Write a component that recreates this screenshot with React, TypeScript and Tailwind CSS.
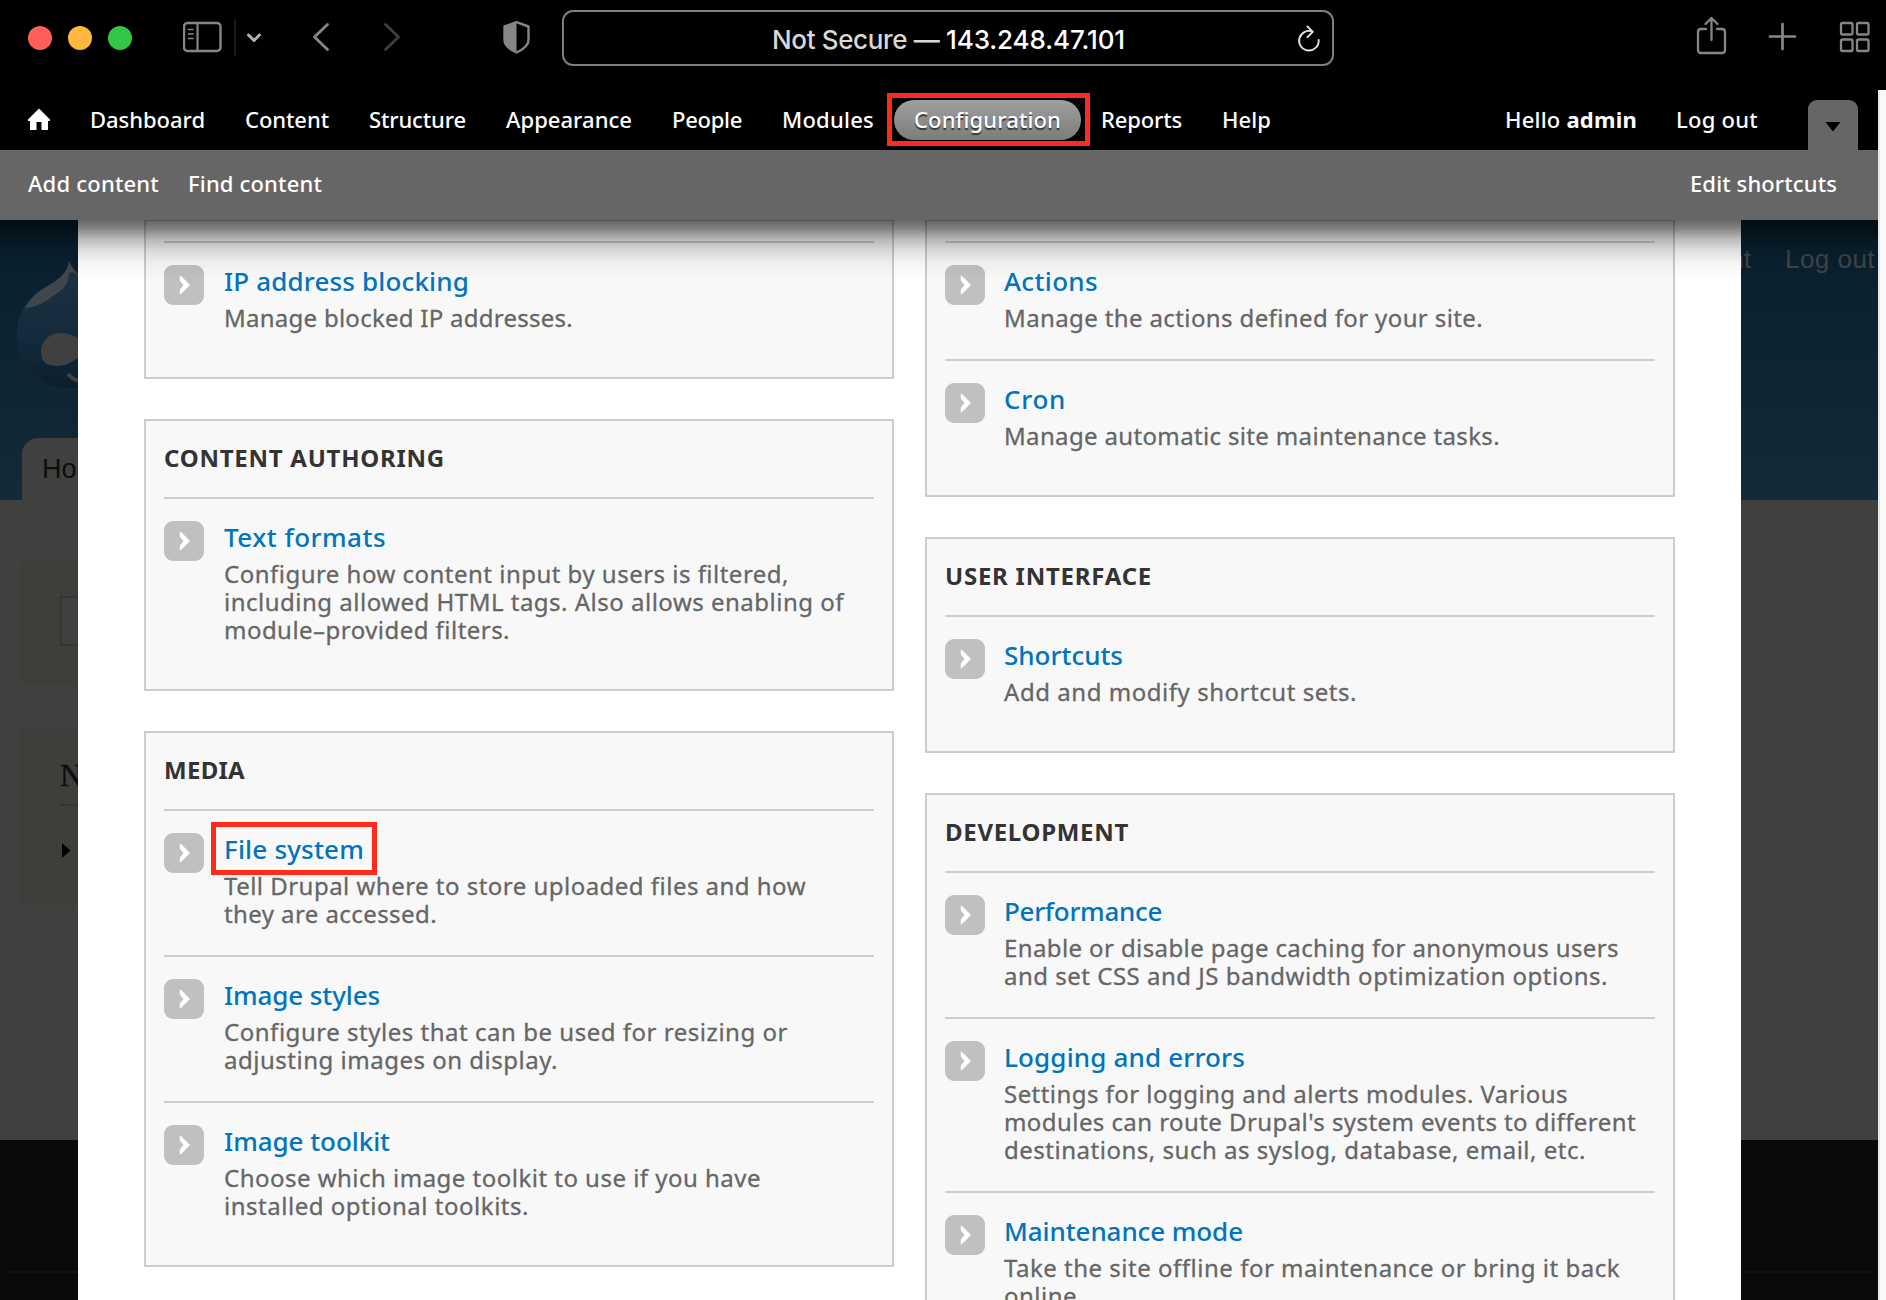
import React, { useLayoutEffect, useRef, useState } from "react";

/** One line of text whose tracking is adjusted to fill a given advance width. */
function Line({ w, className = "", children }: { w: number; className?: string; children: React.ReactNode }) {
  const ref = useRef<HTMLSpanElement>(null);
  const [track, setTrack] = useState(0);
  useLayoutEffect(() => {
    const el = ref.current;
    if (!el) return;
    const n = (el.textContent || "").length;
    setTrack((w - el.getBoundingClientRect().width) / n);
  }, []);
  return (
    <span className={`block whitespace-nowrap ${className}`} style={{ width: w }}>
      <span ref={ref} style={{ letterSpacing: track }}>{children}</span>
    </span>
  );
}

type Row = [string, number];
type Entry = { title: Row; lines: Row[]; marked?: boolean };

const people: Entry[] = [{ title: ["IP address blocking", 245], lines: [["Manage blocked IP addresses.", 349]] }];
const authoring: Entry[] = [
  {
    title: ["Text formats", 162],
    lines: [
      ["Configure how content input by users is filtered,", 565],
      ["including allowed HTML tags. Also allows enabling of", 620],
      ["module–provided filters.", 286],
    ],
  },
];
const media: Entry[] = [
  {
    title: ["File system", 140],
    marked: true,
    lines: [["Tell Drupal where to store uploaded files and how", 582], ["they are accessed.", 213]],
  },
  {
    title: ["Image styles", 156],
    lines: [["Configure styles that can be used for resizing or", 564], ["adjusting images on display.", 334]],
  },
  {
    title: ["Image toolkit", 166],
    lines: [["Choose which image toolkit to use if you have", 537], ["installed optional toolkits.", 305]],
  },
];
const system: Entry[] = [
  { title: ["Actions", 94], lines: [["Manage the actions defined for your site.", 479]] },
  { title: ["Cron", 62], lines: [["Manage automatic site maintenance tasks.", 496]] },
];
const ui: Entry[] = [{ title: ["Shortcuts", 119], lines: [["Add and modify shortcut sets.", 353]] }];
const development: Entry[] = [
  {
    title: ["Performance", 158],
    lines: [["Enable or disable page caching for anonymous users", 615], ["and set CSS and JS bandwidth optimization options.", 604]],
  },
  {
    title: ["Logging and errors", 241],
    lines: [
      ["Settings for logging and alerts modules. Various", 564],
      ["modules can route Drupal's system events to different", 632],
      ["destinations, such as syslog, database, email, etc.", 582],
    ],
  },
  {
    title: ["Maintenance mode", 239],
    lines: [["Take the site offline for maintenance or bring it back", 616], ["online.", 80]],
  },
];

function EntryRow({ entry }: { entry: Entry }) {
  return (
    <li className="flex border-t-2 border-[#cccccc] pb-[27px] last:pb-[45px]">
      <span className="mt-[22px] flex size-10 shrink-0 items-center justify-center rounded-[9px] bg-[#c0c0c0]">
        <svg viewBox="0 0 40 40" className="size-10">
          <path d="M15.8 10.500L17.600 11.500L26 20L17.600 28.500L15.800 29.500V24.500L19.500 20L15.800 15.500Z" fill="#fff" />
        </svg>
      </span>
      <div className="relative ml-5 pt-[20px]">
        <Line w={entry.title[1]} className="h-9 text-[26px] font-medium leading-9 text-[#0074bd]">
          {entry.title[0]}
        </Line>
        <div className="pt-[5px]">
          {entry.lines.map(([t, w]) => (
            <Line key={t} w={w} className="h-7 text-[24px] leading-7 text-[#666666] [-webkit-text-stroke:0.3px_#666666]">
              {t}
            </Line>
          ))}
        </div>
        {entry.marked && <span className="absolute -left-[13px] top-[11px] h-[53px] w-[166px] border-[5px] border-[#ff2a1c]" />}
      </div>
    </li>
  );
}

function Panel({ heading, entries }: { heading?: Row; entries: Entry[] }) {
  return (
    <section className="border-2 border-[#cccccc] bg-[#f8f8f8] px-[18px]">
      {heading ? (
        <div className="h-[76px] pt-[23px]">
          <Line w={heading[1]} className="text-[24px] font-bold leading-[28px] text-[#333333]">
            {heading[0]}
          </Line>
        </div>
      ) : (
        <div className="h-[20px]" />
      )}
      <ul>
        {entries.map((e) => (
          <EntryRow key={e.title[0]} entry={e} />
        ))}
      </ul>
    </section>
  );
}

const nav: Row[] = [
  ["Dashboard", 115],
  ["Content", 84],
  ["Structure", 97],
  ["Appearance", 126],
  ["People", 70],
  ["Modules", 92],
  ["Configuration", 147],
  ["Reports", 81],
  ["Help", 49],
];

function BrowserBar() {
  return (
    <div className="flex h-[90px] items-start bg-black">
      <div className="ml-7 mt-[26px] flex gap-4">
        <i className="size-6 rounded-full bg-[#ff5f5b]" />
        <i className="size-6 rounded-full bg-[#fdb83e]" />
        <i className="size-6 rounded-full bg-[#34c648]" />
      </div>
      <svg className="ml-[51px] mt-[20px]" width="350" height="36" viewBox="183 20 350 36" fill="none" strokeLinecap="round" strokeLinejoin="round">
        <rect x="184" y="23" width="36.5" height="28" rx="3.5" stroke="#868686" strokeWidth="2.4" />
        <path d="M197.500 23V51" stroke="#868686" strokeWidth="2.2" />
        <path d="M188.500 29.500h4.500M188.500 34h4.500M188.500 38.500h4.500" stroke="#868686" strokeWidth="1.6" />
        <path d="M235 20V56" stroke="#1c1c1c" strokeWidth="2" />
        <path d="M248.500 35L254 40.500L259.500 35" stroke="#b4b4b4" strokeWidth="3" />
        <path d="M327.500 24.500L314.500 37L327.500 49.500" stroke="#868686" strokeWidth="2.8" />
        <path d="M385.500 24.500L398.500 37L385.500 49.500" stroke="#3f3f3f" strokeWidth="2.8" />
        <path d="M516.500 22.200L528.500 26.500V40C528.500 45.500 523 49.500 516.500 52.500C510 49.500 504.500 45.500 504.500 40V26.500Z" stroke="#868686" strokeWidth="2.4" />
        <path d="M516.500 22V52.500C510 49.500 504.500 45.500 504.500 40V26.500Z" fill="#868686" />
      </svg>
      <div className="ml-[29px] mt-[10px] flex h-14 w-[772px] rounded-[11px] border-2 border-[#7e7e7e] pl-[208px] pt-[12px] font-[Inter] text-[26px] font-medium leading-8">
        <Line w={174} className="text-[#d8d8d8]">Not Secure —&nbsp;</Line>
        <Line w={179} className="text-white">143.248.47.101</Line>
        <svg className="ml-[172px] -mt-px" width="26" height="32" viewBox="0 0 26 32" fill="none" stroke="#e0e0e0" strokeWidth="1.9" strokeLinecap="round" strokeLinejoin="round">
          <path d="M15.500 8.600A9.800 9.800 0 1 0 21.700 17" />
          <path d="M10.500 3.500L15.700 8.800L10.500 14" />
        </svg>
      </div>
      <svg className="ml-[361px] mt-[16px]" width="180" height="44" viewBox="1695 16 180 44" fill="none" stroke="#868686" strokeWidth="2.3" strokeLinecap="round" strokeLinejoin="round">
        <path d="M1706 29H1701Q1698 29 1698 32V50Q1698 53 1701 53H1722Q1725 53 1725 50V32Q1725 29 1722 29H1717" />
        <path d="M1711.500 40V18.500M1705.500 24L1711.500 18L1717.500 24" />
        <path d="M1770 36.500H1795M1782.500 24V49" strokeWidth="2.7" />
        <rect x="1841" y="23" width="11.500" height="11.500" rx="1.500" />
        <rect x="1857" y="23" width="11.500" height="11.500" rx="1.500" />
        <rect x="1841" y="39.500" width="11.500" height="11.500" rx="1.500" />
        <rect x="1857" y="39.500" width="11.500" height="11.500" rx="1.500" />
      </svg>
    </div>
  );
}

function Toolbar() {
  return (
    <div className="flex h-[60px] items-start bg-black pt-[10px] text-[22px] font-medium text-white">
      <svg className="ml-7 mt-[8px]" width="22" height="22" viewBox="0 0 22 22">
        <path d="M11 0.500L22 11.500V13H20V22H13.500V14H8.500V22H2V13H0V11.500Z" fill="#fff" />
      </svg>
      <nav className="ml-[20px] flex leading-[38px]">
        {nav.map(([t, w]) =>
          t === "Configuration" ? (
            <div key={t} className="relative h-10 rounded-[20px] bg-gradient-to-b from-[#a0a0a0] to-[#7c7c7c] px-5 [text-shadow:0_2px_1px_#333]">
              <Line w={w}>{t}</Line>
              <span className="absolute -left-[7px] -top-[7px] h-[53px] w-[203px] border-[5px] border-[#ff2a1c]" />
            </div>
          ) : (
            <div key={t} className="px-5">
              <Line w={w}>{t}</Line>
            </div>
          )
        )}
      </nav>
      <div className="ml-auto flex leading-[38px]">
        <Line w={132}>Hello <b>admin</b></Line>
        <Line w={82} className="ml-[39px]">Log out</Line>
        <div className="ml-[50px] mr-5 flex h-[50px] w-[50px] justify-center rounded-t-[9px] bg-[#666666] pt-[22px]">
          <svg width="16" height="10" viewBox="0 0 16 10">
            <path d="M0.500 0H15.500L8 9.500Z" fill="#000" />
          </svg>
        </div>
      </div>
    </div>
  );
}

function Backdrop() {
  return (
    <div className="h-full bg-[#404040]">
      <div className="flex h-[280px] flex-col justify-between bg-gradient-to-b from-[#071e2d] to-[#142a38]">
        <div className="flex justify-between pt-[21px]">
          <svg className="ml-4 mt-[19px]" width="100" height="130" viewBox="16 260 100 130">
            <defs>
              <linearGradient id="drop" x1="0" y1="0" x2="0" y2="1">
                <stop offset="0" stopColor="#1d3241" />
                <stop offset="0.6" stopColor="#142b3c" />
                <stop offset="1" stopColor="#0a1d2b" />
              </linearGradient>
            </defs>
            <path d="M69 260C67 280 46 284 32 297C22 307 17 319 17 332C17 365 40 388 68 388H116V290C96 284 74 276 69 260Z" fill="url(#drop)" />
            <path d="M69 261C67 280 46 284 34 296C30 300 27 304 25 308C36 308 46 301 56 294C65 288 69 282 69 273C73 271 76 274 80 278C75 271 71 267 69 261Z" fill="#40474b" />
            <path d="M41 352C41 340 50 333 62 333C70 333 76 337 84 341V354C74 360 68 366 57 366C46 366 41 361 41 352Z" fill="#404040" />
            <path d="M69 375Q74 381 84 382" stroke="#404040" strokeWidth="4" fill="none" strokeLinecap="round" />
          </svg>
          <div className="flex gap-[34px] font-['Liberation_Sans'] text-[26px] leading-9 text-[#444444]">
            <span>My account</span>
            <Line w={90} className="mr-[3px]">Log out</Line>
          </div>
        </div>
        <div className="ml-[22px] h-[62px] w-[120px] rounded-t-[16px] bg-[#404040] pl-5 pt-[13px] font-['Liberation_Sans'] text-[27px] leading-9 text-[#0e0e0e]">Home</div>
      </div>
      <div className="h-[640px] pl-5 pt-[62px]">
        <div className="h-[122px] w-[400px] bg-[#3e3e3b] pl-10 pt-[34px]">
          <div className="h-[50px] w-[300px] border-2 border-[#353535] bg-[#404040]" />
        </div>
        <div className="mt-[44px] h-[177px] w-[400px] bg-[#3e3e3b] pl-10 pt-[26px]">
          <div className="h-[52px] border-b-2 border-[#353535] font-['Liberation_Serif'] text-[32px] leading-[42px] text-[#0e0e0e] [-webkit-text-stroke:0.5px_#0e0e0e]">Navigation</div>
          <svg className="ml-[2px] mt-[37px]" width="9" height="15" viewBox="0 0 9 15">
            <path d="M0 0L8.500 7.500L0 15Z" fill="#000" />
          </svg>
        </div>
      </div>
      <div className="h-[160px] bg-[#0a0a0a] px-2 pt-[131px]">
        <div className="h-[2px] bg-[#121212]" />
      </div>
    </div>
  );
}

export default function App() {
  return (
    <div className="h-[1300px] w-[1886px] overflow-hidden bg-[#f9f9f9] font-['Noto_Sans',sans-serif]">
      <BrowserBar />
      <div className="w-[1880px] border-r-2 border-[#e8e8e8]">
        <Toolbar />
        <div className="flex h-[70px] items-start bg-[#666666] pt-[14px] text-[22px] font-medium leading-[38px] text-white">
          <Line w={131} className="ml-7">Add content</Line>
          <Line w={134} className="ml-[29px]">Find content</Line>
          <Line w={147} className="ml-auto mr-[41px]">Edit shortcuts</Line>
        </div>
        <div className="relative h-[1080px] overflow-hidden">
          <Backdrop />
          <main className="absolute left-[78px] top-0 flex h-[1080px] w-[1663px] items-start gap-[31px] overflow-hidden bg-white pl-[66px]">
            <div className="-mt-px flex w-[750px] flex-col gap-10">
              <Panel entries={people} />
              <Panel heading={["CONTENT AUTHORING", 281]} entries={authoring} />
              <Panel heading={["MEDIA", 81]} entries={media} />
            </div>
            <div className="-mt-px flex w-[750px] flex-col gap-10 [&_li>div]:ml-[19px]">
              <Panel entries={system} />
              <Panel heading={["USER INTERFACE", 207]} entries={ui} />
              <Panel heading={["DEVELOPMENT", 184]} entries={development} />
            </div>
          </main>
          <div className="absolute inset-x-0 top-0 h-[60px] bg-[linear-gradient(to_bottom,rgba(0,0,0,.6)_0,rgba(0,0,0,.49)_8px,rgba(0,0,0,.27)_19px,rgba(0,0,0,.12)_31px,rgba(0,0,0,.04)_43px,transparent_60px)]" />
        </div>
      </div>
    </div>
  );
}
